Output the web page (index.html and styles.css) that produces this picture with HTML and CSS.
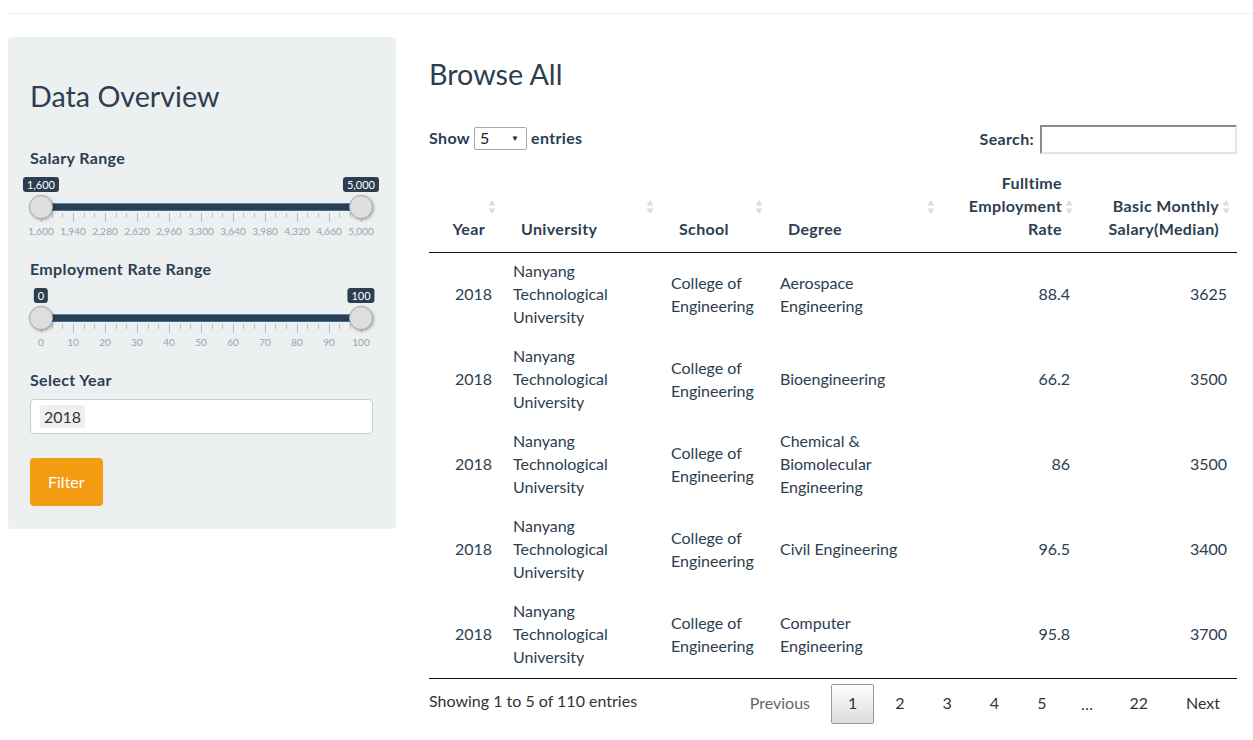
FILE: index.html
```html
<!DOCTYPE html>
<html lang="en">
<head>
<meta charset="utf-8">
<title>Data Overview</title>
<link rel="stylesheet" href="styles.css">
</head>
<body>
<div class="topline"></div>
<div class="layout">
  <aside class="sidebar">
    <h2 class="side-title">Data Overview</h2>

    <div class="field slider-group">
      <label class="field-label">Salary Range</label>
      <div class="slider">
        <div class="track-area">
          <div class="bar"></div>
          <span class="tip" style="left:0%">1,600</span>
          <span class="tip" style="left:100%">5,000</span>
          <div class="ticks">
            <i class="big"></i><i></i><i></i><i class="big"></i><i></i><i></i><i class="big"></i><i></i><i></i><i class="big"></i><i></i><i></i><i class="big"></i><i></i><i></i><i class="big"></i><i></i><i></i><i class="big"></i><i></i><i></i><i class="big"></i><i></i><i></i><i class="big"></i><i></i><i></i><i class="big"></i><i></i><i></i><i class="big"></i>
          </div>
          <div class="grid-labels">
            <span>1,600</span><span>1,940</span><span>2,280</span><span>2,620</span><span>2,960</span><span>3,300</span><span>3,640</span><span>3,980</span><span>4,320</span><span>4,660</span><span>5,000</span>
          </div>
          <span class="handle" style="left:0%"></span>
          <span class="handle" style="left:100%"></span>
        </div>
      </div>
    </div>

    <div class="field slider-group">
      <label class="field-label">Employment Rate Range</label>
      <div class="slider">
        <div class="track-area">
          <div class="bar"></div>
          <span class="tip" style="left:0%">0</span>
          <span class="tip" style="left:100%">100</span>
          <div class="ticks">
            <i class="big"></i><i></i><i></i><i class="big"></i><i></i><i></i><i class="big"></i><i></i><i></i><i class="big"></i><i></i><i></i><i class="big"></i><i></i><i></i><i class="big"></i><i></i><i></i><i class="big"></i><i></i><i></i><i class="big"></i><i></i><i></i><i class="big"></i><i></i><i></i><i class="big"></i><i></i><i></i><i class="big"></i>
          </div>
          <div class="grid-labels">
            <span>0</span><span>10</span><span>20</span><span>30</span><span>40</span><span>50</span><span>60</span><span>70</span><span>80</span><span>90</span><span>100</span>
          </div>
          <span class="handle" style="left:0%"></span>
          <span class="handle" style="left:100%"></span>
        </div>
      </div>
    </div>

    <div class="field">
      <label class="field-label">Select Year</label>
      <div class="select-box"><span class="chip">2018</span></div>
    </div>

    <button class="btn-filter">Filter</button>
  </aside>

  <main class="main">
    <h2 class="main-title">Browse All</h2>

    <div class="dt-top">
      <div class="dt-length">Show <span class="len-select"><span>5</span><span class="caret">&#9660;</span></span> entries</div>
      <div class="dt-search">Search: <span class="search-input"></span></div>
    </div>

    <table class="dt">
      <colgroup>
        <col style="width:74px"><col style="width:158px"><col style="width:109px"><col style="width:172px"><col style="width:138px"><col style="width:157px">
      </colgroup>
      <thead>
        <tr>
          <th class="r">Year<svg class="sort" viewBox="0 0 8 16"><path d="M4 1 L7.5 6.5 H0.5 Z M4 15 L7.5 9.5 H0.5 Z"/></svg></th>
          <th>University<svg class="sort" viewBox="0 0 8 16"><path d="M4 1 L7.5 6.5 H0.5 Z M4 15 L7.5 9.5 H0.5 Z"/></svg></th>
          <th>School<svg class="sort" viewBox="0 0 8 16"><path d="M4 1 L7.5 6.5 H0.5 Z M4 15 L7.5 9.5 H0.5 Z"/></svg></th>
          <th>Degree<svg class="sort" viewBox="0 0 8 16"><path d="M4 1 L7.5 6.5 H0.5 Z M4 15 L7.5 9.5 H0.5 Z"/></svg></th>
          <th class="r">Fulltime Employment Rate<svg class="sort" viewBox="0 0 8 16"><path d="M4 1 L7.5 6.5 H0.5 Z M4 15 L7.5 9.5 H0.5 Z"/></svg></th>
          <th class="r">Basic Monthly Salary(Median)<svg class="sort" viewBox="0 0 8 16"><path d="M4 1 L7.5 6.5 H0.5 Z M4 15 L7.5 9.5 H0.5 Z"/></svg></th>
        </tr>
      </thead>
      <tbody>
        <tr><td class="r">2018</td><td class="uni">Nanyang Technological University</td><td>College of Engineering</td><td>Aerospace Engineering</td><td class="r">88.4</td><td class="r">3625</td></tr>
        <tr><td class="r">2018</td><td class="uni">Nanyang Technological University</td><td>College of Engineering</td><td>Bioengineering</td><td class="r">66.2</td><td class="r">3500</td></tr>
        <tr><td class="r">2018</td><td class="uni">Nanyang Technological University</td><td>College of Engineering</td><td>Chemical &amp; Biomolecular Engineering</td><td class="r">86</td><td class="r">3500</td></tr>
        <tr><td class="r">2018</td><td class="uni">Nanyang Technological University</td><td>College of Engineering</td><td>Civil Engineering</td><td class="r">96.5</td><td class="r">3400</td></tr>
        <tr><td class="r">2018</td><td class="uni">Nanyang Technological University</td><td>College of Engineering</td><td>Computer Engineering</td><td class="r">95.8</td><td class="r">3700</td></tr>
      </tbody>
    </table>

    <div class="dt-bottom">
      <div class="dt-info">Showing 1 to 5 of 110 entries</div>
      <div class="dt-paginate">
        <span class="pg disabled">Previous</span>
        <span class="pg current">1</span>
        <span class="pg">2</span>
        <span class="pg">3</span>
        <span class="pg">4</span>
        <span class="pg">5</span>
        <span class="ellipsis">&hellip;</span>
        <span class="pg">22</span>
        <span class="pg">Next</span>
      </div>
    </div>
  </main>
</div>
</body>
</html>
```

FILE: styles.css
```css
* { box-sizing: border-box; }

body {
  margin: 0;
  font-family: Lato, "Helvetica Neue", Arial, sans-serif;
  font-size: 16px;
  line-height: 1.42857;
  color: #2c3e50;
  background: #fff;
}

.topline {
  margin: 13px 0 0 8px;
  border-top: 1px solid #eeeeee;
}

.layout {
  display: flex;
  align-items: flex-start;
  margin-top: 23px;
  padding: 0 16px 0 8px;
}

/* ---------- sidebar ---------- */
.sidebar {
  width: 388px;
  flex: none;
  background: #ecf0f1;
  border-radius: 4px;
  padding: 43px 23px 23px 22px;
}

.side-title {
  margin: 0 0 34px;
  font-size: 28.7px;
  font-weight: 400;
  line-height: 33px;
}

.field-label {
  display: block;
  font-size: 16px;
  font-weight: 700;
  letter-spacing: 0.35px;
  line-height: 21.4px;
  margin-bottom: 4px;
}

.slider-group { margin-bottom: 19.6px; }

.slider {
  position: relative;
  height: 66px;
}

.track-area {
  position: absolute;
  top: 0;
  bottom: 0;
  left: 11px;
  right: 12px;
}

.bar {
  position: absolute;
  left: 0;
  right: 0;
  top: 31px;
  height: 8px;
  background: #2c3e50;
  border-top: 1px solid #428bca;
  border-bottom: 1px solid #3d6f9c;
}

.tip {
  position: absolute;
  top: 5px;
  transform: translateX(-50%);
  height: 15px;
  padding: 0 4px;
  font-size: 11px;
  line-height: 15px;
  color: #fff;
  background: #2c3e50;
  border-radius: 3px;
  white-space: nowrap;
}

.handle {
  position: absolute;
  top: 23px;
  width: 24px;
  height: 24px;
  margin-left: -12px;
  border-radius: 50%;
  background: #dedede;
  border: 1px solid #aaaaaa;
  box-shadow: 1px 1px 3px rgba(0, 0, 0, 0.3);
}

.ticks {
  position: absolute;
  top: 41px;
  left: 0;
  right: -1px;
  display: flex;
  justify-content: space-between;
  align-items: flex-start;
}

.ticks i {
  display: block;
  width: 1px;
  height: 5px;
  background: #b9c3cc;
}

.ticks i.big {
  height: 9px;
  background: #a3bfdb;
}

.grid-labels {
  position: absolute;
  top: 53px;
  left: 0;
  right: 0;
  display: flex;
  justify-content: space-between;
  font-size: 10px;
  line-height: 12px;
  color: #9aa2a8;
}

.grid-labels span {
  width: 0;
  display: flex;
  justify-content: center;
  white-space: nowrap;
}

.select-box {
  margin-top: 9px;
  height: 35px;
  background: #fff;
  border: 1px solid #cccccc;
  border-radius: 4px;
  padding: 5px 9px;
}

.chip {
  display: inline-block;
  height: 23px;
  padding: 0 4px;
  background: #efefef;
  border-radius: 2px;
  font-size: 16px;
  line-height: 23px;
  color: #333;
}

.btn-filter {
  display: block;
  margin-top: 24px;
  height: 48px;
  padding: 0 18px;
  border: none;
  border-radius: 4px;
  background: #f39c12;
  color: #fff;
  font-family: inherit;
  font-size: 16px;
  line-height: 48px;
}

/* ---------- main ---------- */
.main {
  flex: 1;
  margin-left: 33px;
  min-width: 0;
}

.main-title {
  margin: 21px 0 0;
  font-size: 28.7px;
  font-weight: 400;
  line-height: 33px;
}

.dt-top {
  display: flex;
  justify-content: space-between;
  align-items: center;
  margin-top: 33px;
  height: 31px;
}

.dt-length, .dt-search {
  display: flex;
  align-items: center;
  gap: 4px;
  font-weight: 700;
  letter-spacing: 0.35px;
  color: #2c3e50;
}

.dt-length { margin-top: -3px; }

.len-select {
  display: flex;
  align-items: center;
  justify-content: space-between;
  width: 53px;
  height: 23px;
  padding: 0 7px 0 5px;
  border: 1px solid #a9a9a9;
  border-radius: 2px;
  background: #fff;
  font-weight: 400;
  letter-spacing: 0;
  color: #222;
}

.caret {
  font-size: 8px;
  line-height: 1;
  color: #222;
}

.search-input {
  display: block;
  width: 197px;
  height: 29px;
  margin-left: 2px;
  background: #fff;
  border-top: 2px solid #8a8a8a;
  border-left: 2px solid #8a8a8a;
  border-right: 2px solid #e4e4e4;
  border-bottom: 2px solid #e4e4e4;
}

.dt {
  width: 808px;
  margin-top: 8px;
  table-layout: fixed;
  border-collapse: collapse;
  border-bottom: 1px solid #111;
}

.dt th {
  position: relative;
  padding: 8px 18px 12px;
  text-align: left;
  vertical-align: bottom;
  font-weight: 700;
  letter-spacing: 0.35px;
  line-height: 23px;
  border-bottom: 1px solid #111;
}

.dt .r { text-align: right; }

.sort {
  position: absolute;
  right: 7px;
  top: 50%;
  width: 8px;
  height: 16px;
  margin-top: -9px;
  fill: #dcdcdc;
}

.dt td {
  padding: 6px 10px 10px;
  vertical-align: middle;
  line-height: 23px;
  color: #2c3e50;
}

.dt td.r:first-child { padding-right: 11px; }

.dt-bottom {
  display: flex;
  justify-content: space-between;
  align-items: flex-start;
}

.dt-info {
  padding-top: 11px;
  color: #333;
}

.dt-paginate {
  display: flex;
  align-items: center;
  padding-top: 5px;
}

.pg {
  display: block;
  margin-left: 4px;
  padding: 7px 16px 9px;
  border: 1px solid transparent;
  border-radius: 2px;
  color: #333;
  line-height: 22px;
}

.pg.disabled { color: #666; }

.pg.current {
  border-color: #979797;
  background: linear-gradient(to bottom, #ffffff 0%, #dcdcdc 100%);
}

.ellipsis {
  margin-left: 2px;
  padding: 0 15.5px;
  color: #333;
}
```
